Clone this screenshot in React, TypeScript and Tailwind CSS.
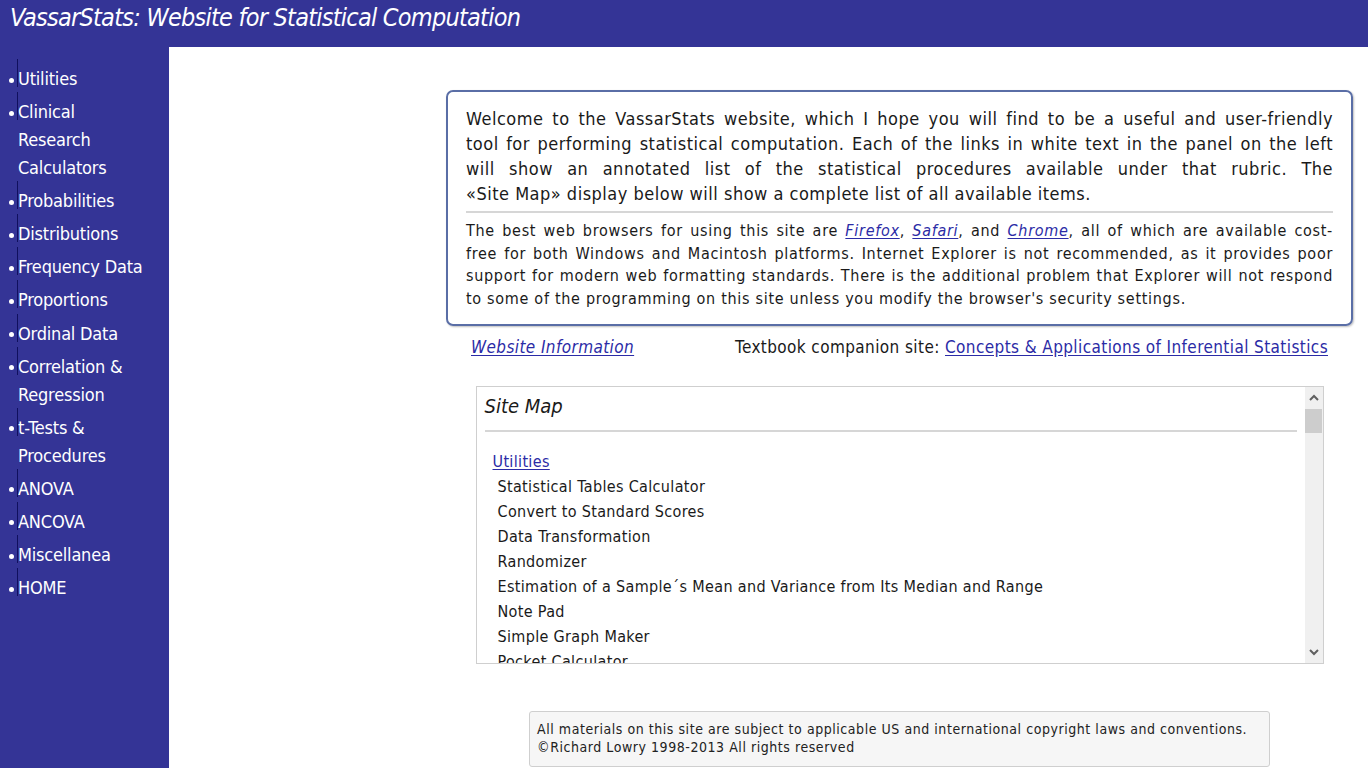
import React from "react";

const FONT = { fontFamily: '"DejaVu Sans Condensed", "DejaVu Sans", Tahoma, sans-serif' };

const navItems: string[][] = [
  ["Utilities"],
  ["Clinical", "Research", "Calculators"],
  ["Probabilities"],
  ["Distributions"],
  ["Frequency Data"],
  ["Proportions"],
  ["Ordinal Data"],
  ["Correlation &", "Regression"],
  ["t-Tests &", "Procedures"],
  ["ANOVA"],
  ["ANCOVA"],
  ["Miscellanea"],
  ["HOME"],
];

const siteMapItems = [
  "Statistical Tables Calculator",
  "Convert to Standard Scores",
  "Data Transformation",
  "Randomizer",
  "Estimation of a Sample\u00b4s Mean and Variance from Its Median and Range",
  "Note Pad",
  "Simple Graph Maker",
  "Pocket Calculator",
];

function JLine({ children, last }: { children: React.ReactNode; last?: boolean }) {
  return (
    <div
      className={
        last
          ? "whitespace-nowrap text-left"
          : "whitespace-nowrap text-justify [text-align-last:justify]"
      }
    >
      {children}
    </div>
  );
}

function Link({ children, italic }: { children: React.ReactNode; italic?: boolean }) {
  return (
    <a className={"text-[#2b2ba6] underline underline-offset-2 " + (italic ? "italic" : "")} href="#">
      {children}
    </a>
  );
}

export default function App() {
  return (
    <div className="min-h-[768px] w-full bg-[#343496] text-[#1a1a1a]" style={FONT}>
      <header className="flex h-[47px] items-start bg-[#343496] pl-[10px] pt-[1px]">
        <h1 className="text-[25px] italic leading-[34px] tracking-[-0.75px] text-white">
          VassarStats: Website for Statistical Computation
        </h1>
      </header>
      <div className="flex">
        <nav className="w-[169px] shrink-0 bg-[#343496] pt-[18px]">
          <ul className="flex flex-col gap-[5.1px]">
            {navItems.map((lines, i) => (
              <li key={i} className="relative flex pl-[9px] text-[18px] leading-[28px] text-white">
                <span className="absolute left-[17px] top-[-6px] h-[28px] w-px bg-[#10105e]" />
                <span className="flex h-[28px] w-[9px] shrink-0 items-center">
                  <span className="mt-[2px] h-[5px] w-[5px] rounded-full bg-white" />
                </span>
                <span className="tracking-[-0.2px]">
                  {lines.map((l, j) => (
                    <div key={j} className="whitespace-nowrap">
                      {l}
                    </div>
                  ))}
                </span>
              </li>
            ))}
          </ul>
        </nav>
        <main className="min-h-[721px] flex-1 bg-white pl-[277px] pr-[15px] pt-[43px]">
          <div className="flex w-[907px] flex-col items-center">
            <section className="w-full rounded-[7px] border-2 border-[#5a6ea6] px-[18px] pb-[14px] pt-[14px] shadow-[1px_1px_2px_rgba(0,0,0,0.25)]">
              <div className="text-[18px] leading-[25px] tracking-[0.5px] text-[#1a1a1a]">
                <JLine>Welcome to the VassarStats website, which I hope you will find to be a useful and user-friendly</JLine>
                <JLine>tool for performing statistical computation. Each of the links in white text in the panel on the left</JLine>
                <JLine>will show an annotated list of the statistical procedures available under that rubric. The</JLine>
                <JLine last>«Site Map» display below will show a complete list of all available items.</JLine>
              </div>
              <div className="mb-[7px] mt-[5px] h-[2px] bg-[#d6d6d6]" />
              <div className="text-[16px] leading-[22.5px] tracking-[0.7px] text-[#1a1a1a]">
                <JLine>
                  The best web browsers for using this site are <Link italic>Firefox</Link>, <Link italic>Safari</Link>, and{" "}
                  <Link italic>Chrome</Link>, all of which are available cost-
                </JLine>
                <JLine>free for both Windows and Macintosh platforms. Internet Explorer is not recommended, as it provides poor</JLine>
                <JLine>support for modern web formatting standards. There is the additional problem that Explorer will not respond</JLine>
                <JLine last>to some of the programming on this site unless you modify the browser's security settings.</JLine>
              </div>
            </section>

            <div className="flex w-full items-center justify-between px-[25px] pt-[10px] text-[17px] leading-[22px] tracking-[0.4px]">
              <Link italic>Website Information</Link>
              <span className="text-[#1a1a1a]">
                Textbook companion site: <Link>Concepts &amp; Applications of Inferential Statistics</Link>
              </span>
            </div>

            <div className="mt-[28px] flex h-[278px] w-[848px] border border-[#cfcfcf] bg-white">
              <div className="flex-1 overflow-hidden pl-[8px] pr-[8px]">
                <div className="pt-[6px] text-[20px] italic leading-[26px] text-[#1a1a1a]">Site Map</div>
                <div className="mt-[11px] h-[2px] bg-[#d6d6d6]" />
                <div className="pl-[8px] pt-[17px] text-[16px] leading-[25px] tracking-[0.34px]">
                  <Link>Utilities</Link>
                  {siteMapItems.map((s) => (
                    <div key={s} className="whitespace-nowrap pl-[5px] text-[#1a1a1a]">
                      {s}
                    </div>
                  ))}
                </div>
              </div>
              <div className="flex w-[18px] flex-col items-center bg-[#f0f0f0]">
                <svg width="18" height="22" viewBox="0 0 18 22">
                  <path d="M5 13 L9 9 L13 13" fill="none" stroke="#606060" strokeWidth="2" />
                </svg>
                <div className="h-[24px] w-[17px] bg-[#cdcdcd]" />
                <div className="flex-1" />
                <svg width="18" height="22" viewBox="0 0 18 22">
                  <path d="M5 9 L9 13 L13 9" fill="none" stroke="#606060" strokeWidth="2" />
                </svg>
              </div>
            </div>

            <footer className="mt-[47px] w-[741px] rounded-[3px] border border-[#cfcfcf] bg-[#f6f6f6] px-[7px] pb-[10px] pt-[8px] text-[14px] leading-[18px] tracking-[0.55px] text-[#222]">
              <div className="whitespace-nowrap">
                All materials on this site are subject to applicable US and international copyright laws and conventions.
              </div>
              <div className="whitespace-nowrap">©Richard Lowry 1998-2013 All rights reserved</div>
            </footer>
          </div>
        </main>
      </div>
    </div>
  );
}
